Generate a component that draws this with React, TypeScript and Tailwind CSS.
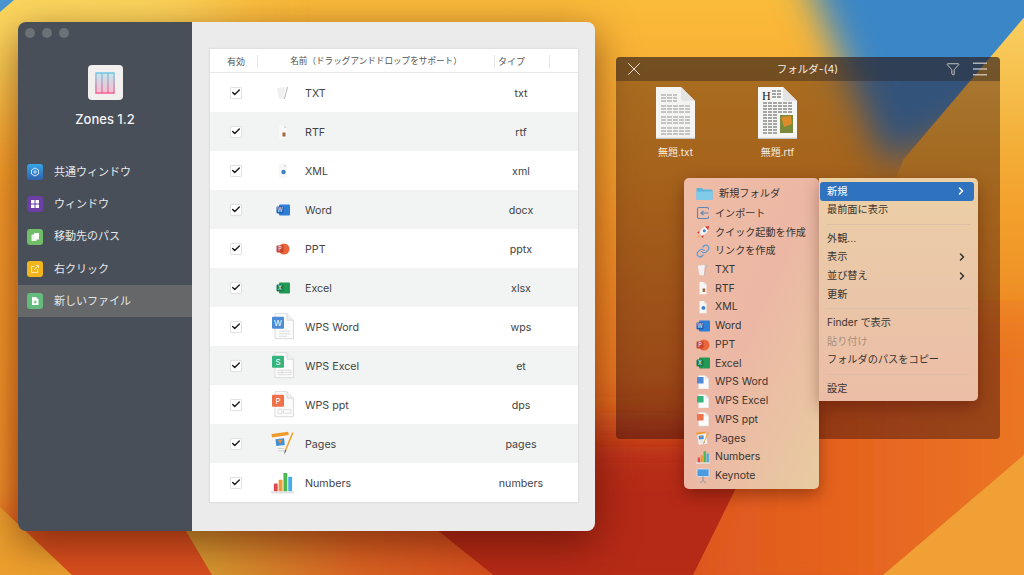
import React from "react";
import { X, Menu, Filter, ChevronRight, Link, Check } from "lucide-react";

const font = "font-['Inter','Noto_Sans_CJK_JP','Noto_Sans',sans-serif]";

function Wallpaper() {
  return (
    <svg className="absolute inset-0 w-full h-full" viewBox="0 0 1024 575" preserveAspectRatio="none">
      <defs>
        <filter id="b40" x="-50%" y="-50%" width="200%" height="200%"><feGaussianBlur stdDeviation="40" /></filter>
        <filter id="b25" x="-50%" y="-50%" width="200%" height="200%"><feGaussianBlur stdDeviation="25" /></filter>
        <filter id="b14" x="-50%" y="-50%" width="200%" height="200%"><feGaussianBlur stdDeviation="18" /></filter>
        <linearGradient id="base" x1="0" y1="0" x2="0" y2="1">
          <stop offset="0" stopColor="#fabb3a" />
          <stop offset="0.3" stopColor="#f6a02b" />
          <stop offset="0.6" stopColor="#ec7f22" />
          <stop offset="0.9" stopColor="#dc551e" />
          <stop offset="1" stopColor="#d94e1e" />
        </linearGradient>
        <linearGradient id="wedge" gradientUnits="userSpaceOnUse" x1="0" y1="8" x2="0" y2="300">
          <stop offset="0" stopColor="#f9d264" />
          <stop offset="0.45" stopColor="#f3b03a" />
          <stop offset="0.7" stopColor="#f3a02c" />
          <stop offset="1" stopColor="#ee8f26" />
        </linearGradient>
        <linearGradient id="rightOrange" x1="0" y1="0" x2="1" y2="0">
          <stop offset="0" stopColor="#dd5520" />
          <stop offset="0.5" stopColor="#e6641f" />
          <stop offset="1" stopColor="#ec7a26" />
        </linearGradient>
        <linearGradient id="gold" x1="0" y1="0" x2="1" y2="0">
          <stop offset="0" stopColor="#d6a032" />
          <stop offset="0.55" stopColor="#da6422" />
          <stop offset="1" stopColor="#d84e1e" />
        </linearGradient>
        <clipPath id="redClip"><path d="M437 530 L500 380 L790 380 L735 490 L693 575 H493 Z" /></clipPath>
      </defs>
      <rect width="1024" height="575" fill="url(#base)" />
      <ellipse cx="40" cy="10" rx="190" ry="90" fill="#fde36e" opacity="0.7" filter="url(#b40)" />
      <rect x="-40" y="200" width="58" height="320" fill="#f29a2a" filter="url(#b14)" />
      <path d="M0 0 H14 L0 12 Z" fill="#4c95d1" />
      <path d="M790 -60 H1100 V60 L885 165 Z" fill="#3a86c6" filter="url(#b14)" />
      <path d="M1032 8 L903 160 L850 300 H1030 Z" fill="url(#wedge)" />
      <path d="M740 330 H1060 V620 H660 Z" fill="url(#rightOrange)" filter="url(#b25)" />
      <g clipPath="url(#redClip)">
        <rect x="400" y="430" width="420" height="190" fill="#b52b19" filter="url(#b25)" />
      </g>
      <path d="M1024 455 L883 575 H1024 Z" fill="#f0a034" />
      <path d="M0 507 L72 575 H0 Z" fill="#eda02e" />
      <path d="M186 531 L212 575 H493 L437 530 Z" fill="url(#gold)" />
    </svg>
  );
}

function TxtIcon({ s = 16 }: { s?: number }) {
  return (
    <svg width={s} height={s} viewBox="0 0 16 16">
      <path d="M2 3 L10 2 L9 14 L4 14 Z" fill="#f0f0f0" />
      <path d="M12 2 L13 2 L10 14 L9 14 Z" fill="#b6b6b6" />
    </svg>
  );
}
function RtfIcon({ s = 16 }: { s?: number }) {
  return (
    <svg width={s} height={s} viewBox="0 0 16 16">
      <path d="M4 1 H9 L12 4 V15 H4 Z" fill="#f7f7f7" />
      <path d="M9 1 L12 4 H9 Z" fill="#dddddd" />
      <rect x="7.5" y="8.5" width="3" height="4" fill="#9c6b43" />
    </svg>
  );
}
function XmlIcon({ s = 16 }: { s?: number }) {
  return (
    <svg width={s} height={s} viewBox="0 0 16 16">
      <path d="M4 1 H9 L12 4 V15 H4 Z" fill="#f7f7f7" />
      <path d="M9 1 L12 4 H9 Z" fill="#dddddd" />
      <circle cx="8.5" cy="9" r="2.2" fill="#3b82c9" />
    </svg>
  );
}
function OfficeIcon({ c, back, l, round }: { c: string; back: string; l: string; round?: boolean }) {
  return (
    <svg width="14" height="14" viewBox="0 0 14 14">
      {round ? <circle cx="8" cy="7" r="5.5" fill={back} /> : <rect x="3" y="1.5" width="11" height="11" rx="1" fill={back} />}
      <rect x="0.5" y="3.5" width="7" height="7" rx="1" fill={c} />
      <text x="4" y="9" fontSize="5.5" fill="#fff" textAnchor="middle" fontFamily="Inter">{l}</text>
    </svg>
  );
}
function WpsIcon({ c, l, s = 22, mark }: { c: string; l: string; s?: number; mark?: "lines" | "table" | "slide" }) {
  return (
    <svg width={s} height={s * 1.2} viewBox="0 0 22 26">
      <path d="M3 0.5 H15 L21.5 7 V25.5 H3 Z" fill="#fbfbfb" stroke="#dcdcdc" />
      <path d="M15 0.5 V7 H21.5" fill="#f0f0f0" stroke="#dcdcdc" />
      <rect x="0" y="3.5" width="12" height="12" rx="1" fill={c} />
      <text x="6" y="12.5" fontSize="8" fill="#fff" textAnchor="middle" fontFamily="Inter">{l}</text>
      {mark === "lines" && <path d="M7 18 H18 M7 20.5 H18 M7 23 H15" stroke="#dedede" />}
      {mark === "table" && <path d="M6 18 H19 V22.5 H6 Z M6 20.2 H19 M10 18 V22.5" stroke="#dedede" fill="none" />}
      {mark === "slide" && <path d="M6 18 H10 V22.5 H6 Z M11.5 18.5 H19 V22 H11.5 Z" stroke="#dedede" fill="none" />}
    </svg>
  );
}
function PagesIcon({ s = 23 }: { s?: number }) {
  return (
    <svg width={s} height={s * 1.1} viewBox="0 0 24 26">
      <path d="M2 4 L18 2 L21 23 L5 25 Z" fill="#f4f4f4" />
      <path d="M0.5 3 L18 0.5 L18.5 4 L1 6.5 Z" fill="#ef9a2a" />
      <rect x="5" y="8" width="9" height="7" fill="#3f90d6" transform="rotate(-6 9 11)" />
      <path d="M7 9 L12 9 L9.5 13 Z" fill="#ef8c2c" />
      <path d="M7 18 H14 M7 20.5 H14" stroke="#cfcfcf" />
      <path d="M22 1 L23.5 2 L16 20 L14.5 19.5 Z" fill="#f0a22e" />
      <path d="M14.5 19.5 L16 20 L13.8 24.5 Z" fill="#444" />
    </svg>
  );
}
function NumbersIcon({ s = 23 }: { s?: number }) {
  return (
    <svg width={s} height={s} viewBox="0 0 24 24">
      <rect x="0" y="21" width="24" height="2.5" fill="#e4e4e4" />
      <rect x="3" y="13" width="4" height="8" rx="0.5" fill="#e04a55" />
      <rect x="8" y="9" width="4" height="12" rx="0.5" fill="#f09b36" />
      <rect x="13" y="2" width="4" height="19" rx="0.5" fill="#4cb84f" />
      <rect x="18" y="6" width="4" height="15" rx="0.5" fill="#45aee6" />
    </svg>
  );
}
function KeynoteIcon() {
  return (
    <svg width="14" height="16" viewBox="0 0 14 16">
      <rect x="1" y="1" width="12" height="7.5" rx="0.5" fill="#4a9be0" stroke="#dbe7f0" strokeWidth="0.8" />
      <rect x="6.4" y="8.5" width="1.2" height="4" fill="#8f9aa6" />
      <path d="M4 15 L7 12.5 L10 15" stroke="#8f9aa6" fill="none" />
    </svg>
  );
}
function RocketIcon() {
  return (
    <svg width="14" height="14" viewBox="0 0 14 14">
      <path d="M13 1 C8 1 5 4 3.5 8 L6 10.5 C10 9 13 6 13 1 Z" fill="#f4f4f4" />
      <path d="M13 1 C11.5 1 10.2 1.3 9 1.8 L12.2 5 C12.7 3.8 13 2.5 13 1 Z" fill="#e0392f" />
      <circle cx="8.3" cy="5.7" r="1.5" fill="#3b82c9" />
      <path d="M3.5 6 L1 7.5 L3 8.8 Z M8 10.5 L6.5 13 L5.2 11 Z" fill="#e0392f" />
      <path d="M3 10 L1 13 L4 11 Z" fill="#f0a22e" />
    </svg>
  );
}
function FolderIcon() {
  return (
    <svg width="17" height="14" viewBox="0 0 17 14">
      <path d="M0.5 2 Q0.5 1 1.5 1 H6 L7.5 2.5 H15.5 Q16.5 2.5 16.5 3.5 V12 Q16.5 13 15.5 13 H1.5 Q0.5 13 0.5 12 Z" fill="#5fb3dc" />
      <path d="M0.5 4.5 H16.5 V12 Q16.5 13 15.5 13 H1.5 Q0.5 13 0.5 12 Z" fill="#7fcbe9" />
    </svg>
  );
}
function ImportIcon() {
  return (
    <svg width="14" height="14" viewBox="0 0 14 14" fill="none" stroke="#5b86b8" strokeWidth="1.1">
      <path d="M12.5 3.5 V3 Q12.5 1.5 11 1.5 H3 Q1.5 1.5 1.5 3 V11 Q1.5 12.5 3 12.5 H11 Q12.5 12.5 12.5 11 V10.5" />
      <path d="M12.5 7 H5 M7.5 4.8 L5 7 L7.5 9.2" />
    </svg>
  );
}

function SideIcon({ c, kind }: { c: string; kind: string }) {
  return (
    <div className={`w-4 h-4 rounded-[3px] flex items-center justify-center ${c}`}>
      <svg width="10" height="10" viewBox="0 0 10 10">
        {kind === "gear" && <g fill="none" stroke="#cfe6fa" strokeWidth="1"><circle cx="5" cy="5" r="1.2" /><path d="M5 1 L8.5 3 V7 L5 9 L1.5 7 V3 Z" /></g>}
        {kind === "grid" && <g fill="#fff"><rect x="1" y="1" width="3.5" height="3.5" rx=".5" /><rect x="5.5" y="1" width="3.5" height="3.5" rx=".5" /><rect x="1" y="5.5" width="3.5" height="3.5" rx=".5" /><rect x="5.5" y="5.5" width="3.5" height="3.5" rx=".5" /></g>}
        {kind === "copy" && <g fill="#fff"><rect x="4" y="1" width="5" height="6.5" rx=".6" /><rect x="1.5" y="2.5" width="5" height="6.5" rx=".6" opacity=".85" /></g>}
        {kind === "share" && <g fill="none" stroke="#fde9a8" strokeWidth="1"><path d="M7.5 5.5 V8.5 H1.5 V2.5 H4.5" /><path d="M4 6 L8.5 1.5 M6 1.5 H8.5 V4" /></g>}
        {kind === "file" && <g><path d="M2 1 H6 L8.5 3.5 V9 H2 Z" fill="#fff" /><path d="M5.2 4.5 V7.5 M3.7 6 H6.7" stroke="#63bb7c" strokeWidth="1" /></g>}
      </svg>
    </div>
  );
}

const side = [
  { t: "共通ウィンドウ", c: "bg-gradient-to-b from-[#35a6e8] to-[#2f62ad]", k: "gear" },
  { t: "ウィンドウ", c: "bg-[#6b3fa5]", k: "grid" },
  { t: "移動先のパス", c: "bg-[#71bd68]", k: "copy" },
  { t: "右クリック", c: "bg-[#f2b51e]", k: "share" },
  { t: "新しいファイル", c: "bg-[#63bb7c]", k: "file", active: true },
];

const rows: { n: string; t: string; i: React.ReactNode }[] = [
  { n: "TXT", t: "txt", i: <TxtIcon /> },
  { n: "RTF", t: "rtf", i: <RtfIcon /> },
  { n: "XML", t: "xml", i: <XmlIcon /> },
  { n: "Word", t: "docx", i: <OfficeIcon c="#1f5fb4" back="#2f7fd6" l="W" /> },
  { n: "PPT", t: "pptx", i: <OfficeIcon c="#c8452a" back="#e8663a" l="P" round /> },
  { n: "Excel", t: "xlsx", i: <OfficeIcon c="#1d7a45" back="#219a55" l="X" /> },
  { n: "WPS Word", t: "wps", i: <WpsIcon c="#4d8bd6" l="W" mark="lines" /> },
  { n: "WPS Excel", t: "et", i: <WpsIcon c="#35b47d" l="S" mark="table" /> },
  { n: "WPS ppt", t: "dps", i: <WpsIcon c="#f0704a" l="P" mark="slide" /> },
  { n: "Pages", t: "pages", i: <PagesIcon /> },
  { n: "Numbers", t: "numbers", i: <NumbersIcon /> },
];

function Row({ r, odd }: { r: (typeof rows)[number]; odd: boolean }) {
  return (
    <div className={`h-[39px] flex items-center ${odd ? "bg-[#f2f4f4]" : "bg-white"}`}>
      <div className="w-[52px] flex justify-center">
        <div className="w-[12px] h-[12px] rounded-[2px] bg-white border border-[#e2e2e2] flex items-center justify-center shadow-[0_0_1px_rgba(0,0,0,0.1)]">
          <Check size={11} strokeWidth={3.5} className="text-[#222]" />
        </div>
      </div>
      <div className="w-[43px] ml-[-1px] flex justify-center">{r.i}</div>
      <div className="ml-[1px] w-[190px] pt-[4px] text-[10.7px] text-[#444]">{r.n}</div>
      <div className="w-[52px] pt-[4px] text-center text-[10.7px] text-[#444]">{r.t}</div>
    </div>
  );
}

function TxtDoc() {
  const ys = [8, 11, 14, 19, 22, 25, 30, 33, 36, 41, 44, 47];
  return (
    <svg viewBox="0 0 39 52" className="w-[39px] h-[52px]">
      <path d="M0 0 H25 L39 14 V52 H0 Z" fill="#f4f4f3" />
      <g stroke="#b4b4b4" strokeWidth="1.3" strokeDasharray="5 1">
        {ys.map((y) => (
          <path key={y} d={`M5 ${y} H${y < 15 ? 21 : 34}`} />
        ))}
      </g>
      <path d="M25 0 L39 14 H28 Q25 14 25 11 Z" fill="#e4e4e4" />
      <path d="M0 51.3 H39" stroke="#bdbdbd" />
    </svg>
  );
}
function RtfDoc() {
  const ys = [16, 19, 22, 25, 28, 31, 34, 37, 40, 43, 46];
  return (
    <svg viewBox="0 0 39 52" className="w-[39px] h-[52px]">
      <path d="M0 0 H25 L39 14 V52 H0 Z" fill="#f6f6f5" />
      <text x="4" y="13" fontSize="12" fontFamily="Liberation Serif" fill="#222">H</text>
      <g stroke="#555" strokeWidth="1.1" strokeDasharray="4 1">
        {[4, 7, 10].map((y) => (
          <path key={y} d={`M14 ${y} H24`} />
        ))}
        {ys.map((y) => (
          <path key={y} d={`M5 ${y} H${y < 27 ? 34 : 20}`} />
        ))}
      </g>
      <rect x="22" y="28" width="13" height="18" fill="#7a8a3a" />
      <path d="M23 30 L33 29 L34 37 L26 40 Z" fill="#dd8a2a" />
      <path d="M25 0 L39 14 H28 Q25 14 25 11 Z" fill="#e4e4e4" />
      <path d="M0 51.3 H39" stroke="#bdbdbd" />
    </svg>
  );
}

const sub: { n: string; i: React.ReactNode }[] = [
  { n: "インポート", i: <ImportIcon /> },
  { n: "クイック起動を作成", i: <RocketIcon /> },
  { n: "リンクを作成", i: <Link size={14} className="text-[#5b9bd5]" /> },
  { n: "TXT", i: <TxtIcon s={14} /> },
  { n: "RTF", i: <RtfIcon s={14} /> },
  { n: "XML", i: <XmlIcon s={14} /> },
  { n: "Word", i: <OfficeIcon c="#1f5fb4" back="#2f7fd6" l="W" /> },
  { n: "PPT", i: <OfficeIcon c="#c8452a" back="#e8663a" l="P" round /> },
  { n: "Excel", i: <OfficeIcon c="#1d7a45" back="#219a55" l="X" /> },
  { n: "WPS Word", i: <WpsIcon c="#4d8bd6" l="" s={12} /> },
  { n: "WPS Excel", i: <WpsIcon c="#35b47d" l="" s={12} /> },
  { n: "WPS ppt", i: <WpsIcon c="#f0704a" l="" s={12} /> },
  { n: "Pages", i: <PagesIcon s={13} /> },
  { n: "Numbers", i: <NumbersIcon s={14} /> },
  { n: "Keynote", i: <KeynoteIcon /> },
];

function MI({ t, arrow, dim }: { t: string; arrow?: boolean; dim?: boolean }) {
  return (
    <div className={`h-[18.7px] px-2 flex items-center justify-between text-[10.2px] ${dim ? "text-[#a98f7c]" : "text-[#3a3430]"}`}>
      <span>{t}</span>
      {arrow && <ChevronRight size={12} strokeWidth={3} className="text-[#333] mr-[2px]" />}
    </div>
  );
}
const Sep = () => <div className="h-px bg-[#dcbfa6] my-[4.3px] mx-2" />;

export default function App() {
  return (
    <div className={`relative w-[1024px] h-[575px] overflow-hidden ${font}`}>
      <Wallpaper />

      {/* Main window */}
      <div className="absolute left-[18px] top-[22px] w-[577px] h-[509px] rounded-[8px] overflow-hidden flex shadow-[0_12px_40px_rgba(60,10,0,0.55)]">
        <aside className="w-[174px] bg-[#494f59] flex flex-col">
          <div className="flex gap-[7px] pt-[6px] pl-[7px]">
            <span className="w-[10px] h-[10px] rounded-full bg-[#6c7077]" />
            <span className="w-[10px] h-[10px] rounded-full bg-[#6c7077]" />
            <span className="w-[10px] h-[10px] rounded-full bg-[#6c7077]" />
          </div>
          <div className="mt-[27px] mx-auto w-[35px] h-[35px] rounded-[4px] bg-[#f1f0ef] flex items-center justify-center">
            <svg width="20" height="22" viewBox="0 0 20 22">
              <defs>
                <linearGradient id="zg" x1="0" y1="0" x2="0" y2="1">
                  <stop offset="0" stopColor="#6cc6e2" />
                  <stop offset="1" stopColor="#f4578f" />
                </linearGradient>
              </defs>
              <path d="M2 2 H6 V20 H2 Z M8 2 H12 V20 H8 Z M14 2 H18 V20 H14 Z" fill="url(#zg)" opacity="0.3" />
              <path d="M1 1 H19 V21 H1 Z M7 1 V21 M13 1 V21" fill="none" stroke="url(#zg)" strokeWidth="1.4" />
            </svg>
          </div>
          <div className="mt-[10px] text-center text-[13px] font-medium text-[#f2f2f2]">Zones 1.2</div>
          <nav className="mt-[26.5px] flex flex-col">
            {side.map((s) => (
              <div key={s.t} className={`h-[32.3px] pl-[9px] flex items-center gap-[11px] text-[11px] ${s.active ? "bg-[#666768]" : ""} text-[#e6e7e9]`}>
                <SideIcon c={s.c} kind={s.k} />
                <span>{s.t}</span>
              </div>
            ))}
          </nav>
        </aside>
        <main className="flex-1 bg-[#ebebeb] pt-[27px] pl-[18px]">
          <div className="w-[368px] border border-[#e0e0e0] box-content -mt-px -ml-px shadow-[0_0_2px_rgba(0,0,0,0.05)]">
            <div className="h-[24px] pt-[2px] bg-white border-b border-[#e8e8e8] flex items-center text-[8.6px] text-[#555]">
              <div className="w-[47px] pl-[5px] text-center text-[9px]">有効</div>
              <div className="w-px h-[13px] bg-[#e5e5e5]" />
              <div className="w-[236px] text-center">名前（ドラッグアンドドロップをサポート）</div>
              <div className="w-px h-[13px] bg-[#e5e5e5]" />
              <div className="w-[54px] pl-[3px] text-[9px]">タイプ</div>
              <div className="w-px h-[13px] bg-[#e5e5e5]" />
            </div>
            {rows.map((r, i) => (
              <Row key={r.n} r={r} odd={i % 2 === 1} />
            ))}
          </div>
        </main>
      </div>

      {/* Folder window */}
      <div className="absolute left-[616px] top-[57px] w-[384px] h-[382px] rounded-[4px] overflow-hidden bg-gradient-to-b from-[rgba(40,0,0,0.38)] to-[rgba(30,0,10,0.4)]">
        <div className="h-[24px] bg-[rgba(40,35,35,0.42)] flex items-center text-[#f3ece4]">
          <div className="flex-1 pl-[7px]">
            <X size={22} strokeWidth={1} />
          </div>
          <div className="text-center text-[10.5px] pl-[2px] pt-[1px]">フォルダ-(4)</div>
          <div className="flex-1 flex justify-end items-center gap-[10px] pr-[10px]">
            <Filter size={14} strokeWidth={1.3} />
            <Menu size={20} strokeWidth={1.2} />
          </div>
        </div>
        <div className="flex pt-[6px] pl-[40px] gap-[63px]">
          <div className="w-[39px] flex flex-col items-center">
            <TxtDoc />
            <div className="mt-[6px] text-[10px] text-[#f5ece0] whitespace-nowrap">無題.txt</div>
          </div>
          <div className="w-[39px] flex flex-col items-center">
            <RtfDoc />
            <div className="mt-[6px] text-[10px] text-[#f5ece0] whitespace-nowrap">無題.rtf</div>
          </div>
        </div>
      </div>

      {/* Sub menu */}
      <div className="absolute left-[684px] top-[178px] w-[135px] h-[311px] rounded-[5px] bg-gradient-to-br from-[#eebca7] via-[#ecb8a5] to-[#e8cba0] shadow-[0_6px_16px_rgba(60,10,0,0.4)] pt-[7px]">
        <div className="h-[18px] pl-[12px] flex items-center gap-[6px] text-[10.2px] text-[#3a3430]">
          <FolderIcon />
          <span>新規フォルダ</span>
        </div>
        <div className="mt-[1px]">
          {sub.map((s) => (
            <div key={s.n} className="h-[18.75px] flex items-center text-[10.5px] text-[#3a3430]">
              <div className="w-[31px] pl-[10px] pr-[4px] flex justify-center shrink-0">{s.i}</div>
              <span className={`whitespace-nowrap ${/^[A-Za-z ]+$/.test(s.n) ? "" : "text-[10.1px]"}`}>{s.n}</span>
            </div>
          ))}
        </div>
      </div>

      {/* Main context menu */}
      <div className="absolute left-[819px] top-[178px] w-[159px] h-[223px] rounded-r-[5px] bg-gradient-to-b from-[#ecd0a6] via-[#eac6a8] to-[#ecbda6] shadow-[0_6px_16px_rgba(60,10,0,0.35)] pt-[4px]">
        <div className="h-[18.7px] ml-px mr-[4px] rounded-[3px] bg-[#2f73bf] text-white px-[7px] flex items-center justify-between text-[10.2px]">
          <span>新規</span>
          <ChevronRight size={12} strokeWidth={3} />
        </div>
        <MI t="最前面に表示" />
        <Sep />
        <MI t="外観..." />
        <MI t="表示" arrow />
        <MI t="並び替え" arrow />
        <MI t="更新" />
        <Sep />
        <MI t="Finder で表示" />
        <MI t="貼り付け" dim />
        <MI t="フォルダのパスをコピー" />
        <Sep />
        <MI t="設定" />
      </div>
    </div>
  );
}
